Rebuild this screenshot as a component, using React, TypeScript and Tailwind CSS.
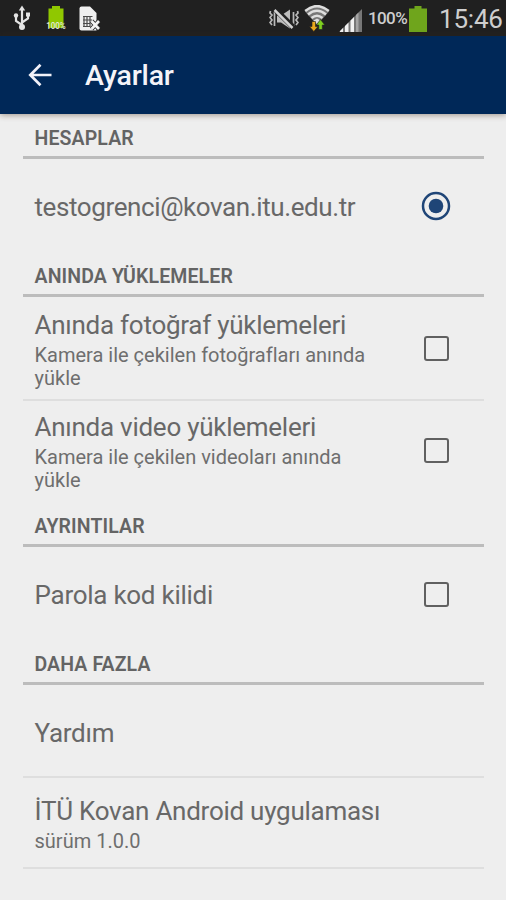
import { useState, type ReactNode } from "react"

function UsbIcon() {
  return (
    <svg width="18" height="26" viewBox="0 0 18 26" fill="none" stroke="#e4e4e4" strokeWidth="2.200">
      <path d="M9 4v18M9 20L3 16V11M9 17.500l6-4V9.500" />
      <path d="M9 0.500l3.200 5H5.800z" fill="#e4e4e4" stroke="none" />
      <circle cx="9" cy="22" r="3" fill="#e4e4e4" stroke="none" />
      <circle cx="3" cy="10.500" r="2.200" fill="#e4e4e4" stroke="none" />
      <path d="M13 7.500h4v4h-4z" fill="#e4e4e4" stroke="none" />
    </svg>
  )
}

function ChargedIcon() {
  return (
    <svg width="20" height="24" viewBox="0 0 20 24">
      <path d="M6 0h8v2.500h3.500V22H2.500V2.500H6z" fill="#90c800" />
      <text
        x="10"
        y="23"
        textAnchor="middle"
        textLength="19.500"
        lengthAdjust="spacingAndGlyphs"
        fontSize="8.500"
        fontWeight="500"
        fontFamily="Roboto, sans-serif"
        fill="#e6e9dc"
      >
        100%
      </text>
    </svg>
  )
}

function SimErrorIcon() {
  return (
    <svg width="22" height="25" viewBox="0 0 22 25" fill="none">
      <path d="M2.500 0.500H11L17.500 7V24.500H2.500Q0.500 24.500 0.500 22.500V2.500Q0.500 0.500 2.500 0.500z" fill="#efefef" />
      <path d="M4 10.500h9.500M4 14h9M4 17.500h7M4 20.500h7M5 10v11M8 10v11M11 10v11" stroke="#4a4a4a" strokeWidth="1.200" />
      <path d="M12.500 15l7.500 8M20 15l-7.500 8" stroke="#2c2c2c" strokeWidth="4.600" />
      <path d="M12.500 15l7.500 8M20 15l-7.500 8" stroke="#f4f4f4" strokeWidth="2.700" />
    </svg>
  )
}

function MutedIcon() {
  return (
    <svg width="30" height="20" viewBox="0 0 30 20" fill="none">
      <path
        d="M1.500 2l-0.500 2 2 2-2 2.500 2 2.500-2 2.500 2 2.500M5.500 3v14M28.500 2l0.500 2-2 2 2 2.500-2 2.500 2 2.500-2 2.500M24.500 3v14"
        stroke="#b9b9b9"
        strokeWidth="1.700"
      />
      <path d="M8 6.500h4l9-6v19l-9-6H8z" fill="#bdbdbd" />
      <path d="M7 1L24 18" stroke="#222222" strokeWidth="5.500" />
      <path d="M5.500 1L23.500 19" stroke="#d2d2d2" strokeWidth="2.500" />
    </svg>
  )
}

function WifiIcon() {
  return (
    <svg width="26" height="27" viewBox="0 0 26 27" fill="none">
      <path d="M1 6.500Q13-4.500 25 6.500L13 20z" fill="#777777" />
      <path
        d="M1.200 6Q13-3.800 24.800 6M4 9.500Q13 2 22 9.500M7.500 13Q13 8.500 18.500 13"
        stroke="#dedede"
        strokeWidth="2.500"
      />
      <path d="M9.500 15.500L13 13.500l3.500 2L13 19z" fill="#dedede" />
      <path d="M8 16.500h3.500v5h2.500L9.800 26.500 5.500 21.500H8z" fill="#e9a91c" stroke="#222222" strokeWidth="0.600" />
      <path d="M14.800 24.500v-4.500h-2.500L16.500 14.500l4.300 5.500h-2.500v4.500z" fill="#7fd01f" stroke="#222222" strokeWidth="0.600" />
    </svg>
  )
}

function SignalIcon() {
  return (
    <svg width="23" height="23" viewBox="0 0 23 23">
      <path d="M0 23L23 0v23z" fill="#777777" />
      <path d="M1 22l3-3v4H1zM6 17l3.500-3.500v9.500H6zM11.500 11.500l3.500-3.500V23h-3.500z" fill="#f2f2f2" />
      <path d="M17 6l2.500-2.500V23H17z" fill="#a5a5a5" />
    </svg>
  )
}

function BatteryIcon() {
  return (
    <svg width="18" height="26" viewBox="0 0 18 26">
      <path d="M5.500 0h7v2.500H18V26H0V2.500h5.500z" fill="#6fa51c" />
    </svg>
  )
}

function StatusBar() {
  return (
    <div className="flex h-9 shrink-0 items-center bg-[#202020] text-[#cecece]">
      <div className="ml-[13px] w-[33px]">
        <UsbIcon />
      </div>
      <div className="w-[33px]">
        <ChargedIcon />
      </div>
      <SimErrorIcon />
      <div className="ml-auto flex items-center">
        <div className="mt-0.5 w-[35px]">
          <MutedIcon />
        </div>
        <div className="w-[35px]">
          <WifiIcon />
        </div>
        <div className="mt-1 w-[27px]">
          <SignalIcon />
        </div>
        <span className="mt-0.5 w-[43px] pl-0.5 text-[17px] font-medium tracking-[-0.600px] whitespace-nowrap">
          100%
        </span>
        <div className="mt-0.5">
          <BatteryIcon />
        </div>
        <span className="mt-0.5 ml-[12px] w-[67px] text-[26px] leading-[34px] tracking-[-0.200px] whitespace-nowrap">
          15:46
        </span>
      </div>
    </div>
  )
}

function AppBar() {
  return (
    <header className="relative z-10 flex h-[78px] shrink-0 items-center bg-[#002858] text-[#f4f4f8] shadow-[0_1px_6px_rgba(60,40,20,0.45)]">
      <button className="ml-7 w-[57px]" aria-label="Geri">
        <svg width="24" height="24" viewBox="0 0 24 24" fill="none" stroke="#f1f1f8" strokeWidth="2.700">
          <path d="M23.500 12H3M12.500 1.800L2.300 12l10.200 10.200" />
        </svg>
      </button>
      <h1 className="mt-0.5 text-[28.500px] font-medium tracking-[-0.200px]">Ayarlar</h1>
    </header>
  )
}

function SectionTitle({ children }: { children: ReactNode }) {
  return (
    <h2 className="flex h-11 shrink-0 items-center border-b-[3px] border-[#bcbcbc] pt-1.5 pl-[11.500px] text-[19.500px] font-semibold tracking-[0.120px] text-[#646464]">
      {children}
    </h2>
  )
}

function Checkbox({ label }: { label: string }) {
  const [checked, setChecked] = useState(false)

  return (
    <button
      role="checkbox"
      aria-label={label}
      aria-checked={checked}
      onClick={() => setChecked(!checked)}
      className={`mr-[35px] size-[25px] shrink-0 rounded-[3px] border-2 border-[#606060] ${
        checked ? "bg-[#1e4a80]" : ""
      }`}
    />
  )
}

interface RowProps {
  title: string
  summary?: string
  className: string
  titleClassName?: string
  control?: ReactNode
}

function Row({ title, summary, className, titleClassName = "tracking-[-0.260px]", control }: RowProps) {
  return (
    <div className={`flex shrink-0 items-center justify-between pl-[11.500px] ${className}`}>
      <div className={`w-[350px] ${summary ? "pt-[3px]" : "pt-0.5"}`}>
        <p className={`text-[26px] leading-[32px] whitespace-nowrap text-[#686868] ${titleClassName}`}>
          {title}
        </p>
        {summary && (
          <p className="pt-[3px] text-[20px] leading-[23px] text-[#6e6e6e] [font-variant-ligatures:none]">
            {summary}
          </p>
        )}
      </div>
      {control}
    </div>
  )
}

export default function App() {
  return (
    <div className="flex h-[900px] w-[506px] flex-col overflow-hidden bg-[#eeeeee] font-[Roboto,sans-serif]">
      <StatusBar />
      <AppBar />
      <main className="flex flex-col pt-px pr-[22px] pl-[23px]">
        <SectionTitle>HESAPLAR</SectionTitle>
        <Row
          title="testogrenci@kovan.itu.edu.tr"
          className="h-[94px]"
          titleClassName="tracking-[-0.400px]"
          control={
            <svg className="mr-[33px]" width="30" height="30" viewBox="0 0 30 30">
              <circle cx="15" cy="15" r="13" fill="none" stroke="#1f4577" strokeWidth="2.500" />
              <circle cx="15" cy="15" r="7.300" fill="#1f4577" />
            </svg>
          }
        />

        <SectionTitle>ANINDA YÜKLEMELER</SectionTitle>
        <Row
          title="Anında fotoğraf yüklemeleri"
          summary="Kamera ile çekilen fotoğrafları anında yükle"
          className="h-[104px] border-b-2 border-[#dedede]"
          control={<Checkbox label="Anında fotoğraf yüklemeleri" />}
        />
        <Row
          title="Anında video yüklemeleri"
          summary="Kamera ile çekilen videoları anında yükle"
          className="mb-1 h-[98px]"
          control={<Checkbox label="Anında video yüklemeleri" />}
        />

        <SectionTitle>AYRINTILAR</SectionTitle>
        <Row
          title="Parola kod kilidi"
          className="h-[94px]"
          control={<Checkbox label="Parola kod kilidi" />}
        />

        <SectionTitle>DAHA FAZLA</SectionTitle>
        <Row title="Yardım" className="h-[93px] border-b-2 border-[#dedede] pt-0.5" />
        <Row
          title="İTÜ Kovan Android uygulaması"
          summary="sürüm 1.0.0"
          className="h-[91px] border-b-2 border-[#dedede]"
        />
      </main>
    </div>
  )
}
